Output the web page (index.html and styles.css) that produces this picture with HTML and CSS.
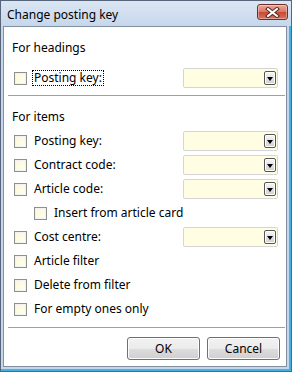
FILE: index.html
```html
<!DOCTYPE html>
<html lang="en">
<head>
    <meta charset="UTF-8">
    <title>Change posting key</title>
    <link rel="stylesheet" href="styles.css">
</head>
<body>
    <div class="window">
        <div class="titlebar">
            <span class="title">Change posting key</span>
            <button class="close" title="Close">
                <svg width="15" height="11" viewBox="0 0 15 11">
                    <path d="M3 2 L12 9 M12 2 L3 9" stroke="#4a2a26" stroke-width="4" stroke-linecap="square"/>
                    <path d="M3 2 L12 9 M12 2 L3 9" stroke="#ffffff" stroke-width="2" stroke-linecap="square"/>
                </svg>
            </button>
        </div>

        <div class="client">
            <!-- headings -->
            <div class="group-title">For headings</div>
            <div class="row first">
                <label class="check"><span class="box"></span><span class="text focus">Posting key:</span></label>
                <div class="combo"><span class="drop"></span></div>
            </div>

            <div class="sep"></div>

            <!-- items -->
            <div class="group-title">For items</div>
            <div class="rows">
                <div class="row">
                    <label class="check"><span class="box"></span><span class="text">Posting key:</span></label>
                    <div class="combo"><span class="drop"></span></div>
                </div>
                <div class="row">
                    <label class="check"><span class="box"></span><span class="text">Contract code:</span></label>
                    <div class="combo"><span class="drop"></span></div>
                </div>
                <div class="row">
                    <label class="check"><span class="box"></span><span class="text">Article code:</span></label>
                    <div class="combo"><span class="drop"></span></div>
                </div>
                <div class="row indent">
                    <label class="check"><span class="box"></span><span class="text">Insert from article card</span></label>
                </div>
                <div class="row">
                    <label class="check"><span class="box"></span><span class="text">Cost centre:</span></label>
                    <div class="combo"><span class="drop"></span></div>
                </div>
                <div class="row">
                    <label class="check"><span class="box"></span><span class="text">Article filter</span></label>
                </div>
                <div class="row">
                    <label class="check"><span class="box"></span><span class="text">Delete from filter</span></label>
                </div>
                <div class="row">
                    <label class="check"><span class="box"></span><span class="text">For empty ones only</span></label>
                </div>
            </div>

            <div class="sep bottom"></div>

            <div class="buttons">
                <button class="btn">OK</button>
                <button class="btn">Cancel</button>
            </div>
        </div>
    </div>
</body>
</html>
```

FILE: styles.css
```css
html, body {
    margin: 0;
    padding: 0;
    background: #ffffff;
    font-family: "Noto Sans", "DejaVu Sans", sans-serif;
    font-size: 12px;
    color: #000000;
}
.window {
    width: 292px;
    height: 372px;
    box-sizing: border-box;
    border: 1px solid #56657a;
    background: #c6d7ec;
    padding: 0 4px 4px 2px;
    display: flex;
    flex-direction: column;
    box-shadow: inset -2px -2px 0 #3fb4e4;
}
.titlebar {
    height: 25px;
    margin: 0 -4px 0 -2px;
    padding: 0 3px 0 6px;
    display: flex;
    align-items: flex-start;
    background: linear-gradient(#dbe6f4, #c6d7ec);
}
.title {
    flex: 1;
    line-height: 27px;
}
.close {
    width: 31px;
    height: 16px;
    margin-top: 3px;
    padding: 0;
    border: 1px solid #6e2f28;
    border-radius: 3px;
    background: linear-gradient(#e9a99a, #d9765f 50%, #c64a30 51%, #d9735c);
    box-shadow: inset 0 0 0 1px rgba(255, 255, 255, 0.35);
    display: flex;
    align-items: center;
    justify-content: center;
}
.client {
    flex: 1;
    background: #ffffff;
    border: 1px solid #838f9f;
    padding: 0 1px 0 4px;
    display: flex;
    flex-direction: column;
}
.group-title {
    margin-top: 13px;
    padding-left: 4px;
    height: 16px;
    line-height: 16px;
}
.rows {
    margin-top: 6px;
    display: flex;
    flex-direction: column;
    gap: 4px;
}
.row {
    height: 20px;
    padding: 0 7px 0 6px;
    display: flex;
    align-items: center;
}
.row.first {
    margin-top: 12px;
}
.row.indent {
    padding-left: 26px;
}
.check {
    flex: 1;
    display: flex;
    align-items: center;
    gap: 5px;
    line-height: 14px;
}
.box {
    width: 11px;
    height: 11px;
    border: 1px solid #8e8f8f;
    background: linear-gradient(135deg, #fbf7d8, #fffff0);
    box-shadow: inset 0 0 0 1px #f2f2f2;
}
.text {
    padding: 0 1px;
    border: 1px solid transparent;
}
.text.focus {
    border: 1px dotted #000000;
}
.combo {
    width: 92px;
    height: 18px;
    border: 1px solid #d5d5d5;
    border-radius: 2px;
    background: #fffee3;
    display: flex;
    align-items: center;
    justify-content: flex-end;
    padding-right: 1px;
}
.drop {
    width: 10px;
    height: 12px;
    border: 1px solid #555555;
    border-radius: 2px;
    background: linear-gradient(#f6f6f6, #d0d0d0);
    box-shadow: inset 0 0 0 1px #ffffff;
    display: flex;
    align-items: center;
    justify-content: center;
}
.drop::after {
    content: "";
    border-left: 3px solid transparent;
    border-right: 3px solid transparent;
    border-top: 4px solid #000000;
    margin-top: 1px;
}
.sep {
    margin-top: 7px;
    height: 1px;
    background: #a0a0a0;
}
.sep.bottom {
    margin-top: 8px;
}
.buttons {
    margin-top: 9px;
    padding-right: 5px;
    display: flex;
    justify-content: flex-end;
    gap: 7px;
}
.btn {
    width: 73px;
    height: 23px;
    border: 1px solid #707070;
    border-radius: 3px;
    background: linear-gradient(#f2f2f2, #ebebeb 50%, #dddddd 51%, #cfcfcf);
    box-shadow: inset 0 0 0 1px #fcfcfc;
    font-family: inherit;
    font-size: 12px;
    color: #000000;
    padding: 0;
}
```
